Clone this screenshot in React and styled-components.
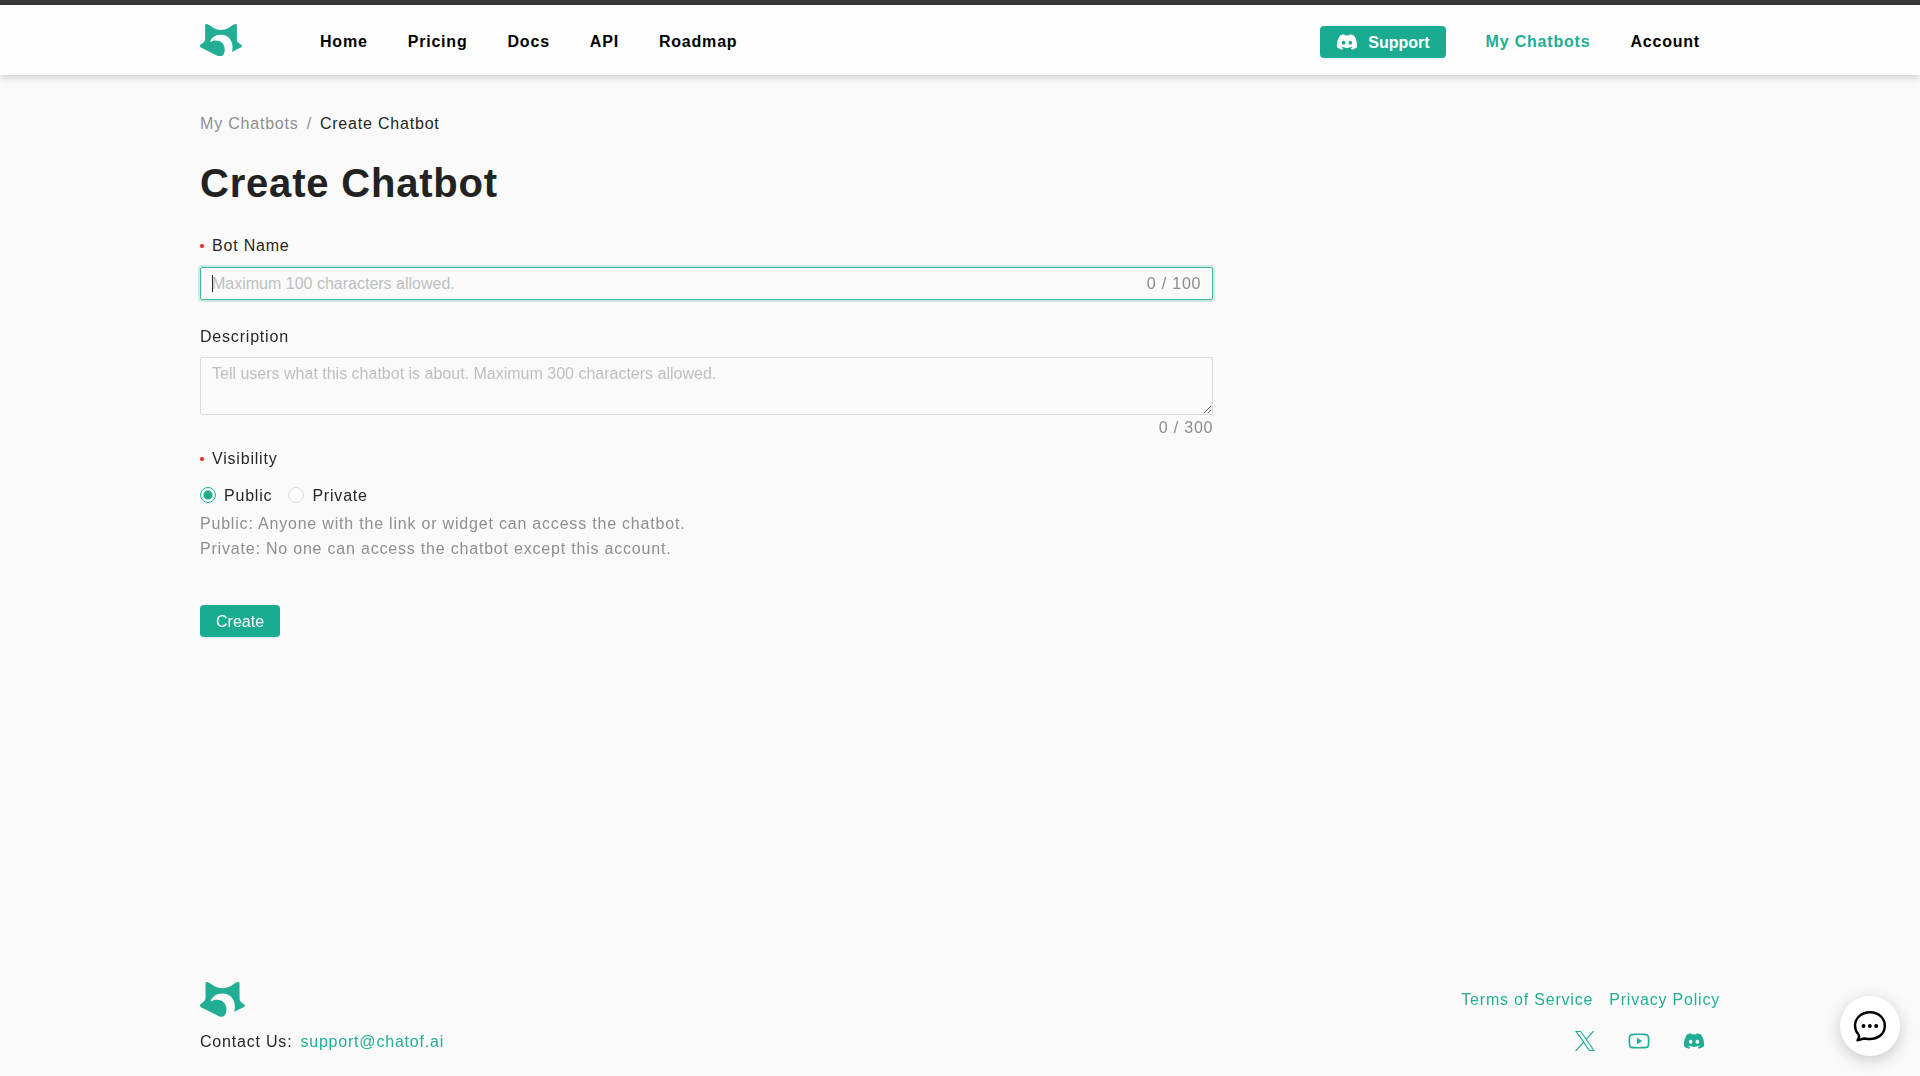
import React, { useState } from "react";
import styled, { createGlobalStyle } from "styled-components";
import { AiOutlineYoutube } from "react-icons/ai";
import { FaDiscord } from "react-icons/fa";

const green = "#1aac91";
const linkGreen = "#22ae94";
const font = `"Liberation Sans", Arial, sans-serif`;

const GlobalStyle = createGlobalStyle`
  *, *::before, *::after { box-sizing: border-box; }
  body {
    margin: 0;
    background: #fafafa;
    color: #262626;
    font: 16px/25px ${font};
    letter-spacing: 0.05em;
  }
  a { color: inherit; text-decoration: none; }
`;

const Page = styled.div`
  min-height: 100vh;
  display: flex;
  flex-direction: column;
  border-top: 5px solid #3b393b;
`;

const Header = styled.header`
  height: 70px;
  padding: 0 200px;
  display: flex;
  align-items: center;
  background: #fdfdfd;
  box-shadow: 0 2px 8px rgba(0, 0, 0, 0.2);
`;

const HomeLink = styled.a`
  display: flex;
  width: 100px;
`;

const Nav = styled.nav`
  display: flex;
  align-items: center;
  padding-top: 4px;
  margin-left: ${(p) => (p.$end ? "auto" : "0")};
`;

const NavLink = styled.a`
  padding: 0 20px;
  font-weight: 700;
  line-height: 24px;
  color: ${(p) => (p.$active ? linkGreen : "#000")};
`;

const Button = styled.button`
  height: 32px;
  padding: 0 16px;
  display: inline-flex;
  align-items: center;
  gap: 10px;
  border: 0;
  border-radius: 4px;
  background: ${green};
  color: #fff;
  font: ${(p) => (p.$bold ? 700 : 400)} 16px/25px ${font};
  letter-spacing: normal;
  box-shadow: 0 2px 0 rgba(0, 0, 0, 0.04);
  cursor: pointer;
`;

const SupportSlot = styled.div`
  display: flex;
  margin-right: 20px;
`;

const Main = styled.main`
  flex: 1;
  padding: 36px 200px 0;
`;

const Crumbs = styled.nav`
  display: flex;
  gap: 8px;
  color: #8f8f8f;
`;

const Current = styled.span`
  color: #262626;
`;

const Title = styled.h1`
  margin: 22px 0 25px;
  font-size: 40px;
  line-height: 50px;
  color: #222;
`;

const Form = styled.form`
  width: calc(100% * 2 / 3);
  display: flex;
  flex-direction: column;
  align-items: stretch;
`;

const Field = styled.div`
  display: flex;
  flex-direction: column;
  margin-bottom: ${(p) => p.$gap || 0}px;
`;

const Label = styled.label`
  display: flex;
  align-items: center;
  gap: 8px;
  height: 25px;
  margin-bottom: 8px;
`;

const Dot = styled.span`
  width: 4px;
  height: 4px;
  border-radius: 50%;
  background: #e02a1d;
`;

const InputBox = styled.div`
  display: flex;
  align-items: center;
  height: 33px;
  margin-top: 1px;
  padding: 0 11px;
  border: 1px solid #3bb89f;
  border-radius: 2px;
  box-shadow: 0 0 0 2px rgba(26, 172, 145, 0.2);
`;

const Caret = styled.span`
  width: 1px;
  height: 17px;
  margin-right: -1px;
  background: #262626;
`;

const TextInput = styled.input`
  flex: 1;
  min-width: 0;
  padding: 0;
  border: 0;
  outline: 0;
  background: transparent;
  color: #262626;
  font: 16px/25px ${font};
  &::placeholder { color: #bfbfbf; opacity: 1; }
  &:placeholder-shown { caret-color: transparent; }
`;

const TextArea = styled.textarea`
  height: 58px;
  padding: 3px 11px;
  border: 1px solid #d9d9d9;
  border-radius: 2px;
  outline: 0;
  background: transparent;
  color: #262626;
  font: 16px/25px ${font};
  resize: vertical;
  &::placeholder { color: #bfbfbf; opacity: 1; }
`;

const Count = styled.span`
  text-align: right;
  color: #8c8c8c;
`;

const RadioGroup = styled.div`
  display: flex;
  align-items: center;
  gap: 16px;
  height: 32px;
`;

const RadioLabel = styled.label`
  display: flex;
  align-items: center;
  gap: 8px;
`;

const Radio = styled.input`
  appearance: none;
  width: 16px;
  height: 16px;
  margin: 0;
  border: 1px solid #d9d9d9;
  border-radius: 50%;
  background: #fff;
  &:checked {
    border-color: ${green};
    background: radial-gradient(circle, ${green} 4px, #fff 5px);
  }
`;

const Help = styled.p`
  margin: 0;
  color: #8f8f8f;
`;

const Footer = styled.footer`
  padding: 0 200px 22px;
  display: flex;
  justify-content: space-between;
  align-items: flex-end;
`;

const FooterColumn = styled.div`
  display: flex;
  flex-direction: column;
  gap: ${(p) => p.$gap}px;
`;

const FooterRow = styled.div`
  display: flex;
  gap: ${(p) => p.$gap}px;
  align-items: center;
`;

const Socials = styled(FooterRow)`
  justify-content: flex-end;
  height: 26px;
  padding-right: 15px;
`;

const FooterLink = styled.a`
  display: flex;
  color: ${linkGreen};
`;

const ChatButton = styled.button`
  position: fixed;
  right: 20px;
  bottom: 20px;
  width: 60px;
  height: 60px;
  padding: 0;
  display: flex;
  align-items: center;
  justify-content: center;
  border: 0;
  border-radius: 50%;
  background: #fff;
  box-shadow: 0 4px 16px rgba(0, 0, 0, 0.2);
  cursor: pointer;
`;

function Logo({ width }) {
  return (
    <svg width={width} viewBox="0 0 45 35" fill={linkGreen} role="img" aria-label="Chatof AI">
      <path d="M5.500 1.600C5.500.3 6.800-.2 8 .3 12.500 2 15 6.300 22.500 6.300S32.500 2 37 .3C38.200-.2 39.500.3 39.500 1.600L39.600 17.500C40 20.500 45 22.200 45 23.500 45 25.500 38 27.500 34.200 30 37 19 31 11.500 22.500 11.500 16 11.500 12 15 10.500 19.500 17 15.500 26.500 18 26.500 27.500 26.500 32.500 23.500 36 19.500 34.500L1.500 25.500C-.5 24.500-.3 22.700 1 21.700 3.500 19.700 5.300 19 5.500 16.500Z" />
    </svg>
  );
}

function XIcon() {
  return (
    <svg width="20" height="20" viewBox="0 0 22 22" fill="currentColor">
      <path d="M13.100 9.320 21.350 0h-1.700l-7.300 8.250L6.550 0H0l8.600 12.230L0 22h1.700l7.650-8.700L15.450 22H22L13.100 9.320zM10.440 12.340l-.87-1.220L2.350 1.150h3.600l5.590 7.970.87 1.220 7.350 10.500h-3.600l-5.720-8.500z" />
    </svg>
  );
}

export default function App() {
  const [name, setName] = useState("");
  const [about, setAbout] = useState("");
  const [naming, setNaming] = useState(true);
  return (
    <>
      <GlobalStyle />
      <Page>
        <Header>
          <HomeLink href="#"><Logo width={42} /></HomeLink>
          <Nav aria-label="Main">
            {["Home", "Pricing", "Docs", "API", "Roadmap"].map((item) => (
              <NavLink key={item} href="#">{item}</NavLink>
            ))}
          </Nav>
          <Nav $end aria-label="User">
            <SupportSlot>
              <Button type="button" $bold><FaDiscord size={22} />Support</Button>
            </SupportSlot>
            <NavLink href="#" $active>My Chatbots</NavLink>
            <NavLink href="#">Account</NavLink>
          </Nav>
        </Header>
        <Main>
          <Crumbs aria-label="Breadcrumb">
            <a href="#">My Chatbots</a>
            <span>/</span>
            <Current>Create Chatbot</Current>
          </Crumbs>
          <Title>Create Chatbot</Title>
          <Form onSubmit={(e) => e.preventDefault()}>
            <Field $gap={24}>
              <Label htmlFor="name"><Dot />Bot Name</Label>
              <InputBox>
                {naming && name === "" && <Caret />}
                <TextInput
                  id="name" autoFocus maxLength={100} value={name}
                  placeholder="Maximum 100 characters allowed."
                  onChange={(e) => setName(e.target.value)}
                  onFocus={() => setNaming(true)}
                  onBlur={() => setNaming(false)}
                />
                <Count>{name.length} / 100</Count>
              </InputBox>
            </Field>
            <Field $gap={6}>
              <Label htmlFor="about">Description</Label>
              <TextArea
                id="about" maxLength={300} value={about}
                placeholder="Tell users what this chatbot is about. Maximum 300 characters allowed."
                onChange={(e) => setAbout(e.target.value)}
              />
              <Count>{about.length} / 300</Count>
            </Field>
            <Field $gap={44} role="radiogroup" aria-labelledby="visibility">
              <Label as="span" id="visibility"><Dot />Visibility</Label>
              <RadioGroup>
                <RadioLabel><Radio type="radio" name="visibility" defaultChecked />Public</RadioLabel>
                <RadioLabel><Radio type="radio" name="visibility" />Private</RadioLabel>
              </RadioGroup>
              <Help>Public: Anyone with the link or widget can access the chatbot.</Help>
              <Help>Private: No one can access the chatbot except this account.</Help>
            </Field>
            <div><Button type="submit">Create</Button></div>
          </Form>
        </Main>
        <Footer>
          <FooterColumn $gap={12}>
            <Logo width={45} />
            <FooterRow $gap={8}>
              <span>Contact Us:</span>
              <FooterLink href="mailto:support@chatof.ai">support@chatof.ai</FooterLink>
            </FooterRow>
          </FooterColumn>
          <FooterColumn $gap={16}>
            <FooterRow $gap={16}>
              <FooterLink href="#">Terms of Service</FooterLink>
              <FooterLink href="#">Privacy Policy</FooterLink>
            </FooterRow>
            <Socials $gap={32}>
              <FooterLink href="#" aria-label="X"><XIcon /></FooterLink>
              <FooterLink href="#" aria-label="YouTube"><AiOutlineYoutube size={24} /></FooterLink>
              <FooterLink href="#" aria-label="Discord"><FaDiscord size={22} /></FooterLink>
            </Socials>
          </FooterColumn>
        </Footer>
      </Page>
      <ChatButton type="button" aria-label="Open chat">
        <svg width="34" height="34" viewBox="0 0 34 34" fill="none" stroke="#000" strokeWidth="2.4" strokeLinejoin="round">
          <path d="M17 3.200C25.500 3.200 31.800 9 31.800 16.700S25.500 30 17 30C14.300 30 12.500 29.500 11 29.500L4.500 31.300C6.800 28.800 6.700 27.500 5.500 25.500 3.200 23 2 20 2 16.700 2 9 8.500 3.200 17 3.200Z" />
          <g fill="#000" stroke="none"><circle cx="10.500" cy="17" r="2" /><circle cx="16.800" cy="17" r="2" /><circle cx="23.200" cy="17" r="2" /></g>
        </svg>
      </ChatButton>
    </>
  );
}
